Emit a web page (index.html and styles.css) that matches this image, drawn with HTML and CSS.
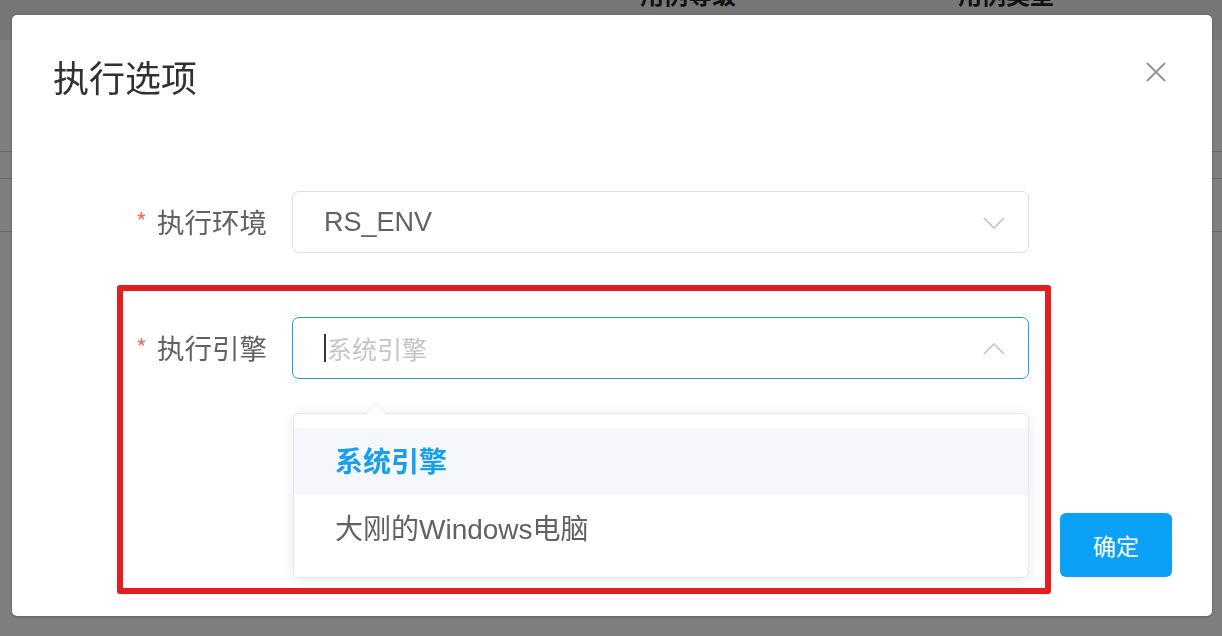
FILE: index.html
```html
<!DOCTYPE html>
<html lang="zh-CN">
<head>
    <meta charset="UTF-8">
    <meta name="viewport" content="width=device-width, initial-scale=1.0">
    <title>执行选项</title>
    <link rel="stylesheet" href="styles.css">
</head>
<body>
    <div class="page">
        <div class="table-head">
            <span class="col col-level">用例等级</span>
            <span class="col col-type">用例类型</span>
        </div>
        <div class="table-row row-a"></div>
        <div class="table-row row-b"></div>
        <div class="table-row row-c"></div>
    </div>

    <div class="overlay">
        <div class="dialog">
            <div class="dialog-header">
                <span class="dialog-title">执行选项</span>
                <button class="dialog-close" aria-label="关闭">
                    <svg width="20" height="20" viewBox="0 0 20 20">
                        <path d="M1 1 L19 19 M19 1 L1 19" stroke="#909399" stroke-width="1.8" fill="none"/>
                    </svg>
                </button>
            </div>

            <div class="dialog-body">
                <div class="form-item">
                    <label class="form-label"><span class="required">*</span>执行环境</label>
                    <div class="select">
                        <span class="select-value">RS_ENV</span>
                        <svg class="select-arrow" width="22" height="12" viewBox="0 0 22 12">
                            <path d="M1 1 L11 11 L21 1" stroke="#c0c4cc" stroke-width="1.6" fill="none"/>
                        </svg>
                    </div>
                </div>

                <div class="form-item">
                    <label class="form-label"><span class="required">*</span>执行引擎</label>
                    <div class="select is-focus">
                        <span class="caret"></span>
                        <span class="select-placeholder">系统引擎</span>
                        <svg class="select-arrow" width="22" height="12" viewBox="0 0 22 12">
                            <path d="M1 11 L11 1 L21 11" stroke="#c0c4cc" stroke-width="1.6" fill="none"/>
                        </svg>
                        <div class="dropdown">
                            <div class="dropdown-arrow"></div>
                            <div class="dropdown-item selected">系统引擎</div>
                            <div class="dropdown-item">大刚的Windows电脑</div>
                        </div>
                    </div>
                </div>
            </div>

            <div class="dialog-footer">
                <button class="btn-primary">确定</button>
            </div>

            <div class="highlight-box"></div>
        </div>
    </div>
</body>
</html>
```

FILE: styles.css
```css
* {
    box-sizing: border-box;
}
body {
    margin: 0;
    background-color: #ffffff;
    font-family: "Liberation Sans", "Noto Sans CJK SC", sans-serif;
    overflow: hidden;
}

/* page behind the mask */
.page {
    width: 1222px;
    height: 636px;
}
.table-head {
    height: 40px;
    background-color: #eeeeee;
    position: relative;
    font-family: "Noto Sans CJK SC", sans-serif;
    font-weight: bold;
    font-size: 24px;
    color: #222;
}
.col {
    position: absolute;
    top: -20px;
    line-height: 28px;
}
.col-level {
    left: 640px;
}
.col-type {
    left: 958px;
}
.table-row {
    border-bottom: 1px solid #d0d0d0;
}
.row-a {
    height: 112px;
}
.row-b {
    height: 27px;
}
.row-c {
    height: 53px;
}

/* mask and dialog */
.overlay {
    position: fixed;
    inset: 0;
    background-color: rgba(0, 0, 0, 0.5);
    padding: 15px 0 0 12px;
}
.dialog {
    position: relative;
    width: 1200px;
    height: 601px;
    background-color: #ffffff;
    border-radius: 5px;
    box-shadow: 0 1px 3px rgba(0, 0, 0, 0.3);
}
.dialog-header {
    padding: 39px 40px 0 41px;
    height: 84px;
}
.dialog-title {
    font-family: "Noto Sans CJK SC", sans-serif;
    font-size: 36px;
    line-height: 44px;
    color: #303133;
}
.dialog-close {
    position: absolute;
    top: 47px;
    right: 46px;
    width: 20px;
    height: 20px;
    padding: 0;
    border: none;
    background: none;
    display: flex;
}

.dialog-body {
    padding-top: 92px;
    display: flex;
    flex-direction: column;
    gap: 64px;
}
.form-item {
    display: flex;
    align-items: center;
    gap: 25px;
}
.form-label {
    width: 255px;
    text-align: right;
    font-family: "Noto Sans CJK SC", sans-serif;
    font-size: 27.5px;
    line-height: 40px;
    color: #606266;
}
.required {
    color: #f56c6c;
    font-size: 24px;
    margin-right: 10px;
    position: relative;
    top: -2px;
}
.select {
    position: relative;
    width: 737px;
    height: 62px;
    border: 1.5px solid #dcdfe6;
    border-radius: 7px;
    display: flex;
    align-items: center;
    padding-left: 31px;
}
.select.is-focus {
    border-color: #1a9fe8;
}
.select-value {
    font-size: 27px;
    color: #606266;
}
.select-placeholder {
    font-family: "Noto Sans CJK SC", sans-serif;
    font-size: 25px;
    color: #c0c4cc;
    margin-left: 1px;
}
.caret {
    width: 2px;
    height: 28px;
    background-color: #333;
}
.select-arrow {
    position: absolute;
    right: 23px;
    top: 25px;
}

/* dropdown panel */
.dropdown {
    position: absolute;
    top: 95px;
    left: 0;
    width: 736px;
    padding: 14px 0 15px;
    background-color: #ffffff;
    border: 1px solid #e4e7ed;
    border-radius: 6px;
    box-shadow: 0 2px 14px rgba(0, 0, 0, 0.09);
    z-index: 2;
}
.dropdown-arrow {
    position: absolute;
    top: -11px;
    left: 71px;
    width: 0;
    height: 0;
    border-left: 11px solid transparent;
    border-right: 11px solid transparent;
    border-bottom: 11px solid #e4e7ed;
}
.dropdown-arrow::after {
    content: "";
    position: absolute;
    top: 1px;
    left: -10px;
    border-left: 10px solid transparent;
    border-right: 10px solid transparent;
    border-bottom: 10px solid #ffffff;
}
.dropdown-item {
    height: 67px;
    line-height: 70px;
    padding-left: 41px;
    font-family: "Liberation Sans", "Noto Sans CJK SC", sans-serif;
    font-size: 28px;
    color: #606266;
}
.dropdown-item.selected {
    background-color: #f5f7fa;
    color: #149ff0;
    font-weight: bold;
}

.dialog-footer {
    position: absolute;
    right: 40px;
    bottom: 39px;
}
.btn-primary {
    width: 112px;
    height: 64px;
    border: none;
    border-radius: 6px;
    background-color: #0aa1f6;
    color: #ffffff;
    font-family: "Noto Sans CJK SC", sans-serif;
    font-size: 23px;
}

/* annotation box drawn over the form */
.highlight-box {
    position: absolute;
    left: 105px;
    top: 270px;
    width: 934px;
    height: 309px;
    border: 6px solid #e41e1e;
    border-radius: 3px;
    z-index: 3;
    pointer-events: none;
}
```
